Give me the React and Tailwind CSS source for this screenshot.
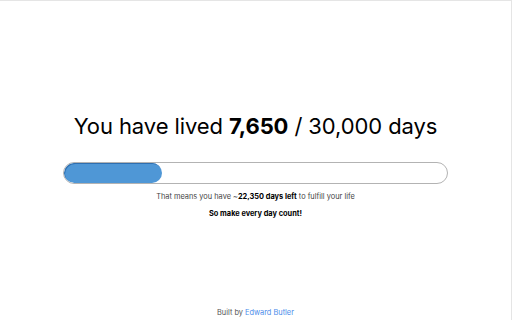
import React from "react";

export default function App() {
  const lived = 7650;
  const total = 30000;
  const pct = (lived / total) * 100;

  return (
    <div
      className="flex h-[320px] w-[512px] flex-col border-t border-r border-[#e5e5e5] bg-white text-black"
      style={{ fontFamily: "Inter, 'Noto Sans', sans-serif" }}
    >
      <div className="flex flex-1 flex-col items-center pt-[108px]">
        <h1 className="text-[22px] leading-[34px] tracking-[-0.1px]">
          You have lived <span className="font-bold">7,650</span> / 30,000 days
        </h1>
        <div className="mt-[19px] h-[22px] w-[385px] overflow-hidden rounded-full border border-[#b3b3b3]">
          <div
            className="h-full rounded-full bg-[#4f97d6] shadow-[inset_1px_1px_0_#2f6fb0]"
            style={{ width: `${pct}%` }}
          />
        </div>
        <p className="mt-[6px] text-[7.4px] leading-[14px] text-[#444]">
          That means you have ~<span className="font-bold text-black">22,350 days left</span> to fulfill your life
        </p>
        <p className="mt-[3px] text-[7.4px] font-bold leading-[14px]">So make every day count!</p>
      </div>
      <footer className="pb-0 text-center text-[7.4px] leading-[14px] text-[#555]">
        Built by <a className="text-[#4a8bea]">Edward Butler</a>
      </footer>
    </div>
  );
}
